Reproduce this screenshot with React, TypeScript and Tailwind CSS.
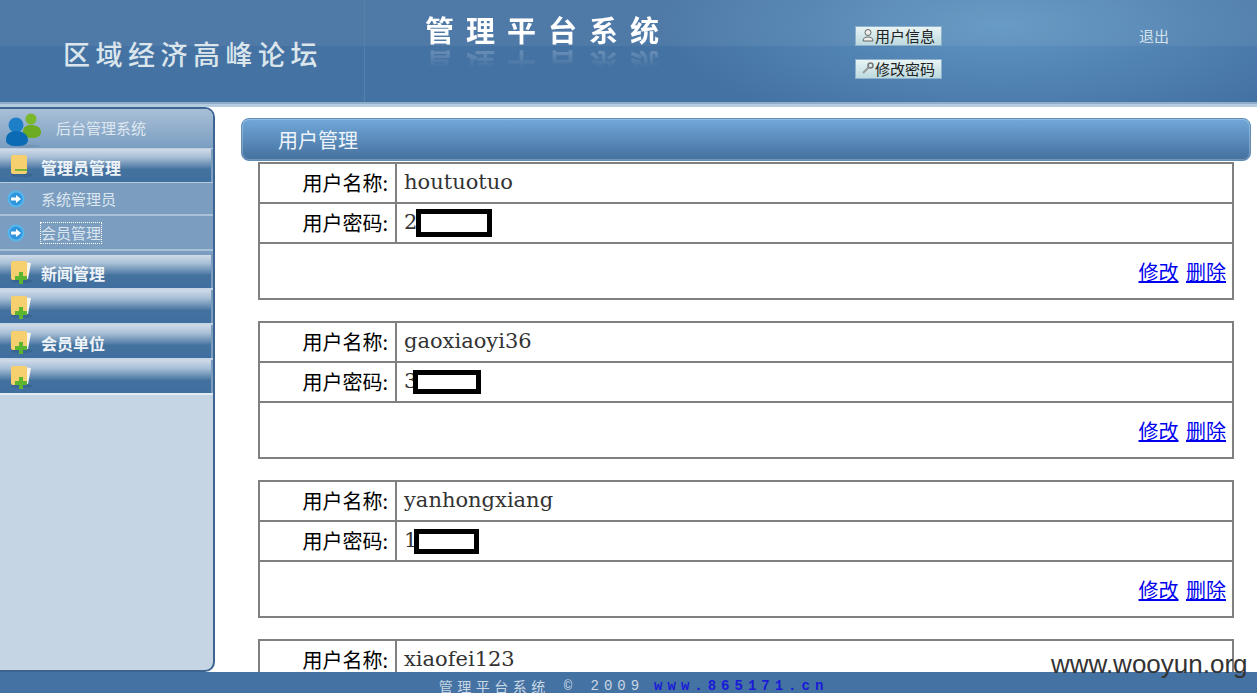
const sans = "font-['Noto_Sans_CJK_SC','DejaVu_Sans',sans-serif]";

const users = [
  { name: "houtuotuo", pass: "2", box: "w-[76px] h-[28px] -ml-[1px]" },
  { name: "gaoxiaoyi36", pass: "3", box: "w-[68px] h-[24px] -ml-[4px]" },
  { name: "yanhongxiang", pass: "1", box: "w-[65px] h-[25px] -ml-[3px]" },
  { name: "xiaofei123", pass: "", box: "" },
];

function UsersIcon() {
  return (
    <svg width="38" height="38" viewBox="0 0 38 38" className="shrink-0">
      <ellipse cx="20" cy="36" rx="16" ry="1.5" fill="#6f8daa" opacity="0.6" />
      <circle cx="26" cy="9" r="5.5" fill="#7ab82c" />
      <path d="M18 22c0-5 3-7 8-7s10 2 10 7c0 4-4 6-9 6s-9-2-9-6z" fill="#6cab22" />
      <circle cx="11" cy="15" r="7.5" fill="#1c7fc8" />
      <path d="M1 30c0-6 4-9 10-9s12 3 12 9c0 4-4 6-11 6S1 34 1 30z" fill="#0c6bb5" />
    </svg>
  );
}

function FolderIcon({ plus }: { plus: boolean }) {
  return (
    <svg width="24" height="24" viewBox="0 0 24 24" className="shrink-0">
      {plus && <path d="M14 2l7 1-3 16h-4z" fill="#f4f4ee" />}
      <ellipse cx="12" cy="21" rx="11" ry="2" fill="#2f5a86" opacity="0.5" />
      <rect x="1" y="1" width="16" height="19" rx="2" fill="#f6cf6e" />
      {plus ? (
        <path d="M9 12h4v4h4v4h-4v4H9v-4H5v-4h4z" fill="#5cb531" />
      ) : (
        <rect x="5" y="15" width="12" height="2" fill="#7fb53a" />
      )}
    </svg>
  );
}

function ArrowIcon() {
  return (
    <svg width="18" height="18" viewBox="0 0 18 18" className="shrink-0">
      <circle cx="9" cy="9" r="8.5" fill="#58b6ee" />
      <circle cx="9" cy="9" r="6.5" fill="#2f95dc" />
      <path d="M4 7.6h5V5l5 4-5 4v-2.6H4z" fill="#ffffff" />
    </svg>
  );
}

function MenuRow({ label, plus }: { label?: string; plus: boolean }) {
  return (
    <div className="flex h-[33px] shrink-0 items-center border-r-2 border-[#7a9dc0] bg-[linear-gradient(#cfdbe8,#a8bfd6_25%,#44729f_62%,#3f6fa0)] pl-[10px]">
      <FolderIcon plus={plus} />
      <span className={`ml-[7px] pt-[3px] text-[16px] leading-[20px] font-bold text-[#eef3f8] ${sans}`}>{label}</span>
    </div>
  );
}

function SubRow({ label, focused }: { label: string; focused?: boolean }) {
  return (
    <div className={`flex shrink-0 items-center border-b-2 border-[#a9c1d6] bg-[#7a9dc0] pl-[7px] ${focused ? "h-[35px]" : "h-[33px]"}`}>
      <ArrowIcon />
      <span
        className={`ml-[16px] text-[15px] leading-[20px] text-[#dce6ef] ${sans} ${
          focused ? "outline-1 outline-dotted outline-white" : ""
        }`}
      >
        {label}
      </span>
    </div>
  );
}

function UserTable({ name, pass, box }: { name: string; pass: string; box: string }) {
  return (
    <table className="w-[976px] shrink-0 border-collapse border-2 border-[#808080] bg-white">
      <tbody>
        <tr className="h-[40px]">
          <td className={`w-[137px] border-2 border-[#808080] pr-[7px] text-right text-[20px] text-black ${sans}`}>用户名称:</td>
          <td className="border-2 border-[#808080] pl-[7px] text-[21px] text-[#333] font-['DejaVu_Serif',serif]">{name}</td>
        </tr>
        <tr className="h-[40px]">
          <td className={`border-2 border-[#808080] pr-[7px] text-right text-[20px] text-black ${sans}`}>用户密码:</td>
          <td className="border-2 border-[#808080] pl-[7px] text-[21px] text-[#333] font-['DejaVu_Serif',serif]">
            <span className="flex items-center">
              {pass}
              <span className={`inline-block border-[5px] border-black bg-white ${box}`} />
            </span>
          </td>
        </tr>
        <tr className="h-[56px]">
          <td colSpan={2} className={`border-2 border-[#808080] pr-[6px] pt-[2px] text-right text-[20px] ${sans}`}>
            <a href="#" className="text-[#0000ee] underline">修改</a>{" "}
            <a href="#" className="ml-[3px] text-[#0000ee] underline">删除</a>
          </td>
        </tr>
      </tbody>
    </table>
  );
}

export default function App() {
  return (
    <div className={`relative flex h-screen w-full flex-col overflow-hidden bg-white ${sans}`}>
      {/* top banner */}
      <header className="flex h-[102px] shrink-0 bg-[linear-gradient(rgba(255,255,255,0.06)_0,rgba(255,255,255,0.06)_46px,transparent_46px),radial-gradient(ellipse_340px_110px_at_1000px_25px,#5f95c2,transparent),linear-gradient(#4472a3,#4472a3)]">
        <div className="w-[365px] shrink-0 border-r border-[#5680aa] pl-[63px] pt-[37px]">
          <span className="whitespace-nowrap text-[27px] leading-[34px] font-medium tracking-[5.5px] text-[#dbe5ec]">区域经济高峰论坛</span>
        </div>
        <div className="ml-[60px] w-[430px] shrink-0 pt-[9px]">
          <div className="whitespace-nowrap text-[29px] font-bold leading-[40px] tracking-[12px] text-white [-webkit-box-reflect:below_-3px_linear-gradient(transparent_45%,rgba(255,255,255,0.25))]">
            管理平台系统
          </div>
        </div>
        <div className="flex w-[283px] shrink-0 flex-col gap-[13px] pt-[26px]">
          <button className="flex h-[20px] w-[87px] items-center justify-center border border-[#8fb2cc] bg-[linear-gradient(#e9f4f5,#bcdade)] pb-[2px] text-[15px] leading-none text-[#222]">
            <svg width="12" height="14" viewBox="0 0 12 14" className="mr-[1px]">
              <circle cx="6" cy="4.5" r="3" fill="#eee" stroke="#666" />
              <path d="M1 13c0-3 2-4 5-4s5 1 5 4z" fill="#eee" stroke="#666" />
            </svg>
            用户信息
          </button>
          <button className="flex h-[20px] w-[87px] items-center justify-center border border-[#8fb2cc] bg-[linear-gradient(#e9f4f5,#bcdade)] pb-[2px] text-[15px] leading-none text-[#222]">
            <svg width="12" height="14" viewBox="0 0 12 14" className="mr-[1px]">
              <circle cx="8.5" cy="4.5" r="2.5" fill="none" stroke="#777" strokeWidth="1.5" />
              <path d="M6.5 6.5L1 12" stroke="#999" strokeWidth="2" />
            </svg>
            修改密码
          </button>
        </div>
        <div className="pt-[26px] pl-[1px] text-[15px] leading-[20px] text-[#d4e2ed]">退出</div>
      </header>
      <div className="h-[5px] shrink-0 border-t-2 border-[#8fadc9] bg-[#b5cbdf]" />

      <div className="flex min-h-0 flex-1">
        {/* left menu */}
        <aside className="flex w-[215px] shrink-0 flex-col overflow-hidden rounded-r-[10px] border-t-2 border-r-2 border-b-2 border-[#3d6591] bg-[#c5d5e4]">
          <div className="flex h-[39px] shrink-0 items-center rounded-tr-[8px] bg-[linear-gradient(#a9bfd6,#7a9ec2)] pl-[5px]">
            <UsersIcon />
            <span className="ml-[13px] text-[15px] text-[#dde7f0]">后台管理系统</span>
          </div>
          <div className="h-[1px] shrink-0 bg-[#b9cbdc]" />
          <MenuRow label="管理员管理" plus={false} />
          <div className="h-[1px] shrink-0 bg-[#b9cbdc]" />
          <SubRow label="系统管理员" />
          <SubRow label="会员管理" focused />
          <div className="h-[4px] shrink-0 bg-[#7a9dc0]" />
          <MenuRow label="新闻管理" plus />
          <div className="h-[2px] shrink-0 bg-[#c5d5e4]" />
          <MenuRow plus />
          <div className="h-[2px] shrink-0 bg-[#c5d5e4]" />
          <MenuRow label="会员单位" plus />
          <div className="h-[2px] shrink-0 bg-[#c5d5e4]" />
          <MenuRow plus />
          <div className="h-[2px] shrink-0 bg-[#e3ebf2]" />
        </aside>

        {/* content */}
        <main className="min-w-0 flex-1 overflow-hidden pt-[11px]">
          <div className="ml-[26px] flex h-[43px] w-[1010px] items-center rounded-[8px] border border-[#5f8db8] bg-[linear-gradient(#71a8da,#44709d)] pl-[36px] text-[20px] text-[#eef4fa] shadow-[inset_0_0_0_1px_rgba(255,255,255,0.25)]">
            用户管理
          </div>
          <div className="ml-[43px] mt-[1px] flex flex-col gap-[21px]">
            {users.map((u) => (
              <UserTable key={u.name} name={u.name} pass={u.pass} box={u.box} />
            ))}
          </div>
        </main>
      </div>

      <footer className="flex h-[21px] shrink-0 items-start justify-center bg-[#4472a3] pl-[10px] pt-[5px] whitespace-nowrap text-[14px] leading-[18px] text-[#c9d7e4]">
        <span className="tracking-[4.5px]">管理平台系统</span>
        <span className="ml-[14px] tracking-[5px] font-['Liberation_Mono',monospace]">© 2009</span>
        <a href="#" className="ml-[10px] tracking-[5px] font-['Liberation_Mono',monospace] font-bold text-[#1a1ad8]">www.865171.cn</a>
      </footer>

      <div className="absolute left-[1051px] top-[648px] font-['Liberation_Sans',sans-serif] text-[26px] leading-[32px] text-[#333]">www.wooyun.org</div>
    </div>
  );
}
